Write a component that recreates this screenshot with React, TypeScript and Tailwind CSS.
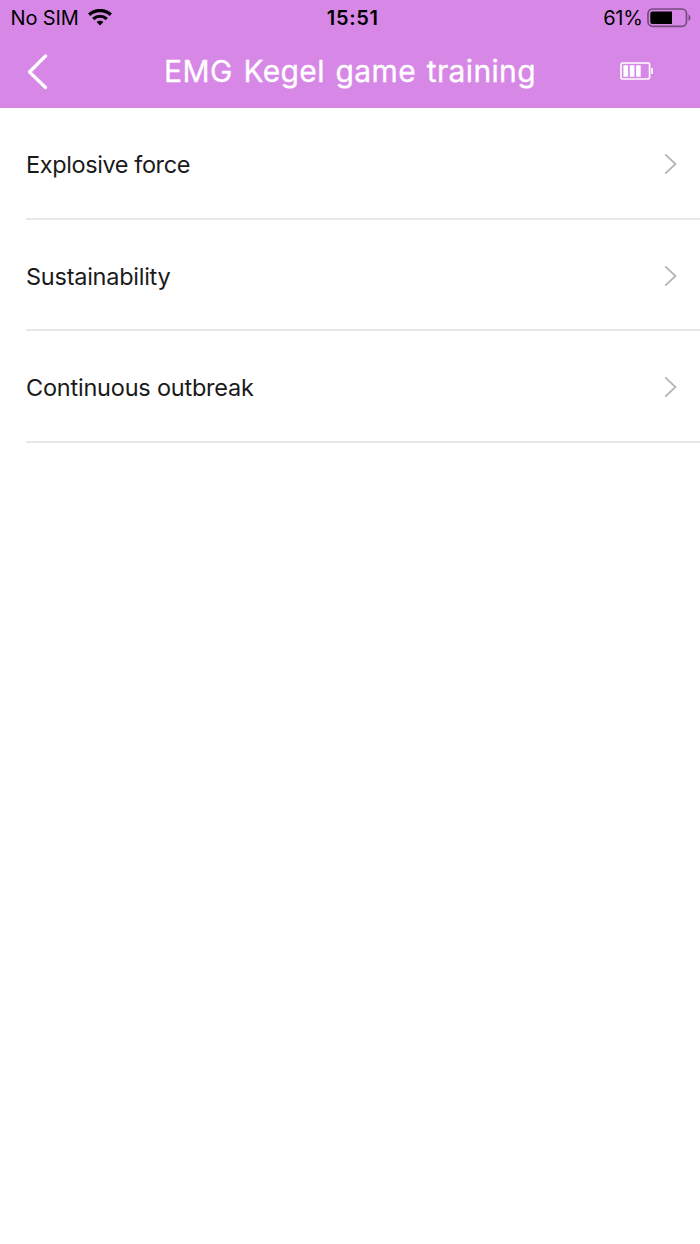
const items = [
  { title: "Explosive force", text: "tracking-[-0.4px]" },
  { title: "Sustainability", text: "tracking-[-0.25px]" },
  { title: "Continuous outbreak", text: "tracking-[-0.22px]" },
];

const WifiIcon = () => (
  <svg width="24" height="18" viewBox="0 0 24 18" fill="none" stroke="#000">
    <path d="M1.2 5.8C7.2.2 16.8.2 22.8 5.8" strokeWidth="3.4" />
    <path d="M5.2 10c3.9-3.6 9.7-3.6 13.6 0" strokeWidth="3.1" />
    <path d="M12 16.6l-3.4-3.5c1.9-1.8 4.9-1.8 6.8 0z" fill="#000" stroke="none" />
  </svg>
);

const PhoneBattery = () => (
  <svg width="44" height="20" viewBox="0 0 44 20" fill="none">
    <rect x="1" y="1" width="38.5" height="17.3" rx="4.5" stroke="#000" strokeOpacity="0.45" strokeWidth="1.7" />
    <path d="M5.3 3.5H25V16H5.3a2 2 0 0 1-2-2V5.5a2 2 0 0 1 2-2z" fill="#000" />
    <path d="M41.5 6.5c2.6 1 2.6 5.5 0 6.500z" fill="#000" fillOpacity="0.45" />
  </svg>
);

const DeviceBattery = () => (
  <svg width="34" height="19" viewBox="0 0 34 19" fill="none">
    <rect x="1" y="1" width="28.6" height="16" rx="1.5" stroke="#fff" strokeWidth="1.7" />
    <path d="M3.4 3.2h4.7v11.6H3.4zM9.8 3.2h4.6v11.6H9.8zM16.1 3.2h4.6v11.6h-4.6z" fill="#fff" />
    <path d="M31.2 6h.8q.9 0 .9.9v4.2q0 .9-.9.9h-.8z" fill="#fff" />
  </svg>
);

const StatusBar = () => (
  <div className="grid h-9 grid-cols-3 items-center text-[20px] leading-none text-black">
    <div className="flex items-center pl-[10.5px]">
      <span className="w-[77px] whitespace-nowrap tracking-[-0.15px]">No SIM</span>
      <WifiIcon />
    </div>
    <span className="pl-[5.5px] text-center font-semibold tracking-[0.7px]">15:51</span>
    <div className="flex items-center justify-end gap-[5px] pr-[8.5px] pb-px">
      <span className="pt-px tracking-[-0.3px]">61%</span>
      <PhoneBattery />
    </div>
  </div>
);

const NavBar = () => (
  <div className="flex h-[72px] items-center justify-between pr-[46px] pb-px pl-[27px] text-white">
    <button type="button" aria-label="Back" className="w-[53px]">
      <svg width="22" height="36" viewBox="0 0 22 36" fill="none" stroke="currentColor" strokeWidth="3.2">
        <path d="M18.5 2L2.500 18 18.500 33.500" strokeLinecap="round" strokeLinejoin="round" />
      </svg>
    </button>
    <h1 className="pb-px text-[30px] leading-none whitespace-nowrap tracking-[0.35px] [word-spacing:2px] [-webkit-text-stroke:0.3px_white]">
      EMG Kegel game training
    </h1>
    <DeviceBattery />
  </div>
);

export default function App() {
  return (
    <div className="min-h-screen bg-white font-['Inter','Liberation_Sans',sans-serif]">
      <header className="bg-[#d788e7]">
        <StatusBar />
        <NavBar />
      </header>
      <ul className="pl-[26px]">
        {items.map((item) => (
          <li
            key={item.title}
            className="flex h-[111.6px] items-center justify-between border-b-2 border-[#e8e8e8] pt-[2.5px] pr-[23px]"
          >
            <span className={`pt-[1.5px] text-[23.5px] leading-none text-[#1a1a1a] ${item.text}`}>
              {item.title}
            </span>
            <svg width="13" height="22" viewBox="0 0 13 22" fill="none" stroke="#b5b5b5" strokeWidth="1.8">
              <path d="M1.2 1.3L11.5 11 1.2 20.7" />
            </svg>
          </li>
        ))}
      </ul>
    </div>
  );
}
